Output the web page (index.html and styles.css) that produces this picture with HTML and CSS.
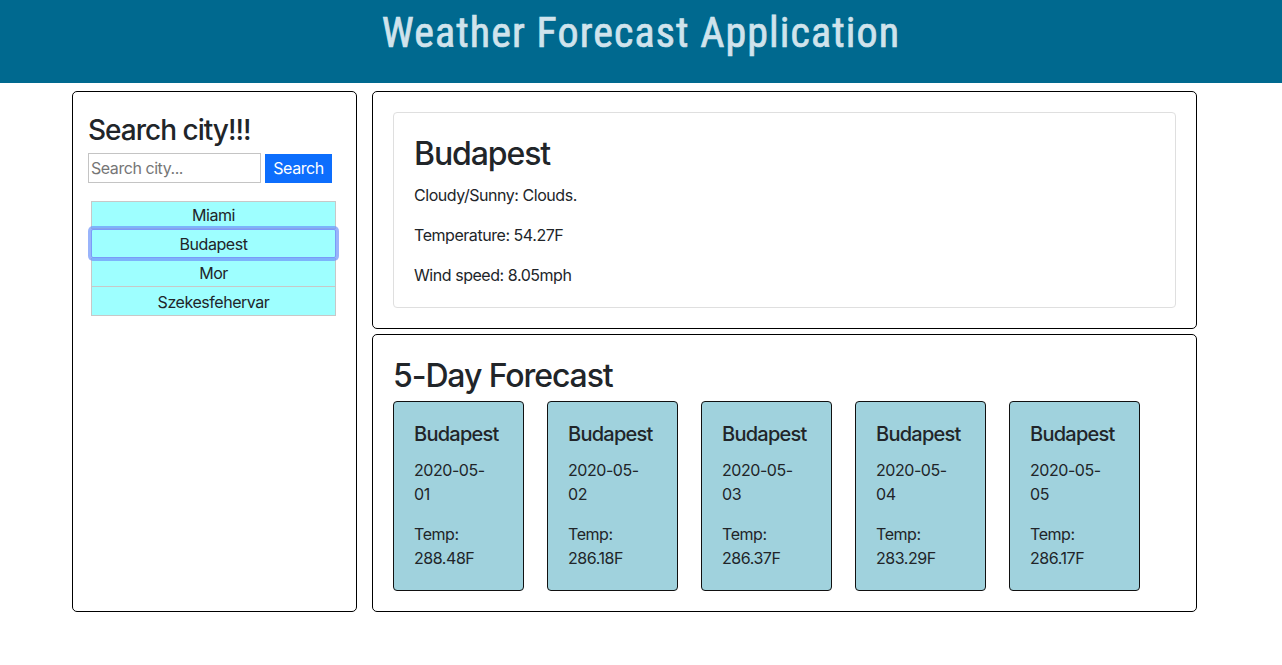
FILE: index.html
```html
<!DOCTYPE html>
<html lang="en">
<head>
<meta charset="utf-8">
<title>Weather Forecast Application</title>
<link rel="stylesheet" href="styles.css">
</head>
<body>
<header class="app-header">
  <h1 class="app-title">Weather Forecast Application</h1>
</header>
<main class="layout">
  <aside class="panel search-panel">
    <h3 class="search-title">Search city!!!</h3>
    <form class="search-form">
      <input class="search-input" type="text" placeholder="Search city...">
      <button class="search-btn" type="button">Search</button>
    </form>
    <ul class="city-list">
      <li><button class="city-btn" type="button">Miami</button></li>
      <li><button class="city-btn is-focused" type="button">Budapest</button></li>
      <li><button class="city-btn" type="button">Mor</button></li>
      <li><button class="city-btn" type="button">Szekesfehervar</button></li>
    </ul>
  </aside>
  <section class="right-col">
    <div class="panel current-panel">
      <div class="current-card">
        <h2 class="heading">Budapest</h2>
        <p class="line">Cloudy/Sunny: Clouds.</p>
        <p class="line">Temperature: 54.27F</p>
        <p class="line">Wind speed: 8.05mph</p>
      </div>
    </div>
    <div class="panel forecast-panel">
      <h2 class="heading">5-Day Forecast</h2>
      <div class="forecast-row">
        <div class="day-card">
          <h5 class="day-city">Budapest</h5>
          <p class="day-text">2020-05-01</p>
          <p class="day-text">Temp: 288.48F</p>
        </div>
        <div class="day-card">
          <h5 class="day-city">Budapest</h5>
          <p class="day-text">2020-05-02</p>
          <p class="day-text">Temp: 286.18F</p>
        </div>
        <div class="day-card">
          <h5 class="day-city">Budapest</h5>
          <p class="day-text">2020-05-03</p>
          <p class="day-text">Temp: 286.37F</p>
        </div>
        <div class="day-card">
          <h5 class="day-city">Budapest</h5>
          <p class="day-text">2020-05-04</p>
          <p class="day-text">Temp: 283.29F</p>
        </div>
        <div class="day-card">
          <h5 class="day-city">Budapest</h5>
          <p class="day-text">2020-05-05</p>
          <p class="day-text">Temp: 286.17F</p>
        </div>
      </div>
    </div>
  </section>
</main>
</body>
</html>
```

FILE: styles.css
```css
* { box-sizing: border-box; }

body {
  margin: 0;
  font-family: Inter, "Noto Sans", "Liberation Sans", sans-serif;
  font-size: 16px;
  line-height: 1.5;
  letter-spacing: -0.45px;
  color: #212529;
  background: #fff;
}

.app-header {
  height: 83px;
  background: #00698f;
  padding-top: 6px;
  text-align: center;
}

.app-title {
  margin: 0;
  font-family: "Liberation Sans Narrow", "Roboto Condensed", Roboto, sans-serif;
  font-weight: 400;
  font-size: 42px;
  line-height: 54px;
  letter-spacing: 1.1px;
  -webkit-text-stroke: 0.7px #d0e3ec;
  color: #d0e3ec;
}

.layout {
  display: flex;
  gap: 15px;
  width: 1125px;
  margin: 8px 0 0 72px;
}

.panel {
  border: 1px solid #000;
  border-radius: 5px;
  background: #fff;
}

.search-panel {
  width: 285px;
  padding: 22px 15px 16px;
}

.search-title {
  margin: 0 0 5px;
  font-size: 28px;
  font-weight: 500;
  line-height: 1.2;
  letter-spacing: -1px;
}

.search-form {
  display: flex;
  gap: 4px;
  align-items: flex-start;
}

.search-input {
  width: 173px;
  height: 30px;
  border: 1px solid #c4c4c4;
  padding: 1px 2px;
  font-family: inherit;
  font-size: 16px;
  letter-spacing: -0.45px;
  color: #212529;
  outline: none;
}

.search-input::placeholder { color: #767676; }

.search-btn {
  margin-top: 1px;
  width: 67px;
  height: 29px;
  border: 0;
  border-radius: 0;
  background: #0d6efd;
  color: #fff;
  font-family: inherit;
  font-size: 16px;
  letter-spacing: -0.45px;
  padding: 0;
}

.city-list {
  list-style: none;
  margin: 18px 5px 0 3px;
  padding: 0;
}

.city-btn {
  display: block;
  width: 100%;
  height: 29px;
  margin: 0;
  border: 1px solid #c8c8c8;
  border-top: 0;
  background: #9effff;
  color: #212529;
  font-family: inherit;
  font-size: 16px;
  letter-spacing: -0.45px;
  line-height: 26px;
  padding: 2px 0 0;
  position: relative;
}

.city-list li:first-child .city-btn {
  border-top: 1px solid #c8c8c8;
  height: 28px;
  line-height: 27px;
  padding: 0;
}

.city-btn.is-focused {
  z-index: 1;
  border: 1px solid #7a9cf8;
  box-shadow: 0 0 0 3px rgba(110, 148, 250, 0.7);
  border-radius: 2px;
  padding-top: 1px;
}

.right-col {
  width: 825px;
  display: flex;
  flex-direction: column;
  gap: 5px;
}

.current-panel {
  padding: 20px;
}

.current-card {
  border: 1px solid #dfdfdf;
  border-radius: 4px;
  padding: 22px 20px 20px;
}

.heading {
  margin: 0 0 8px;
  font-size: 32px;
  font-weight: 500;
  line-height: 1.2;
  letter-spacing: -1.1px;
}

.current-card .heading { margin-bottom: 10px; }

.line {
  margin: 0 0 16px;
}

.line:last-child { margin-bottom: 0; }

.forecast-panel {
  padding: 22px 20px 20px;
}

.forecast-panel .heading { margin-bottom: 5px; }

.forecast-row {
  display: flex;
  gap: 23px;
}

.day-card {
  width: 131px;
  border: 1px solid #111;
  border-radius: 4px;
  background: #a0d2dd;
  padding: 20px 25px 20px 20px;
}

.day-city {
  margin: 0 -5px 12px 0;
  font-size: 20px;
  font-weight: 500;
  line-height: 24px;
  letter-spacing: -0.75px;
}

.day-text {
  margin: 0 0 16px;
}

.day-text:last-child { margin-bottom: 0; }
```
